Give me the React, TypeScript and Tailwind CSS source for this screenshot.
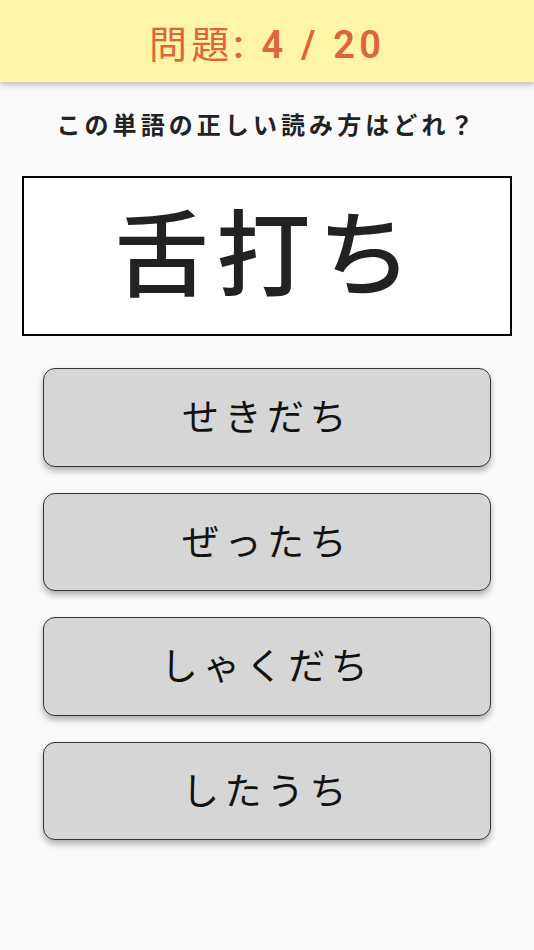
const options = ["せきだち", "ぜったち", "しゃくだち", "したうち"]

export default function App() {
  return (
    <div
      className="min-h-[950px] bg-[#fafafa] text-[#222]"
      style={{ fontFamily: "Roboto, 'Noto Sans CJK JP', sans-serif" }}
    >
      {/* Header */}
      <div className="h-[82px] bg-[#fff5a6] flex items-center justify-center shadow-[0_3px_6px_rgba(0,0,0,0.25)] relative">
        <h1 className="text-[38px] leading-none text-[#e1633a] tracking-[0.11em] pt-[8px]">
          <span className="font-normal">問題</span>
          <span className="font-semibold">: 4 / 20</span>
        </h1>
      </div>

      {/* Question */}
      <p className="mt-[28px] text-center text-[24px] leading-[32px] font-bold tracking-[0.17em] text-[#222]">
        この単語の正しい読み方はどれ？
      </p>

      {/* Word */}
      <div className="mx-[22px] mt-[34px] h-[160px] border-2 border-black bg-white flex items-center justify-center">
        <span className="text-[94px] leading-none font-medium tracking-[0.08em] text-[#222] pt-[2px]">舌打ち</span>
      </div>

      {/* Options */}
      <div className="mt-[32px] px-[43px] flex flex-col gap-[26px]">
        {options.map((opt) => (
          <button
            key={opt}
            className="h-[98.5px] w-full rounded-[12px] border border-[#333] bg-[#d6d6d6] shadow-[0_4px_6px_rgba(0,0,0,0.3)] flex items-center justify-center"
          >
            <span className="text-[37px] leading-none font-normal tracking-[0.15em] text-[#111] pt-[3px]">{opt}</span>
          </button>
        ))}
      </div>
    </div>
  )
}
